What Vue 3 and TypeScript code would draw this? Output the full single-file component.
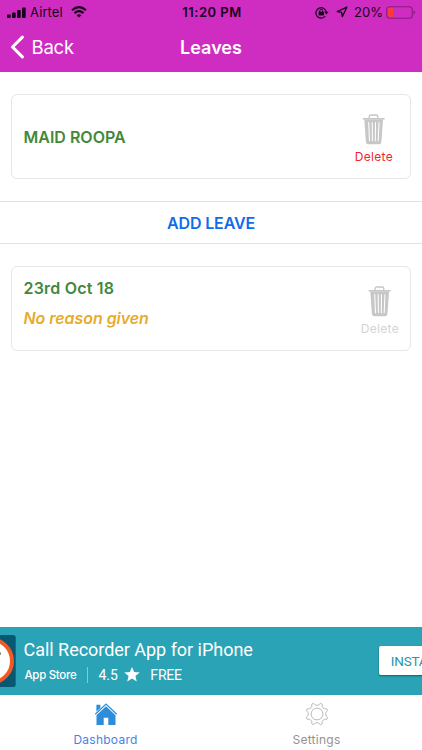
<script setup lang="ts">
interface Tab {
  name: string
  active: boolean
}

const tabs: Tab[] = [
  { name: 'Dashboard', active: true },
  { name: 'Settings', active: false },
]

const signalBars = [3.5, 5.5, 8, 10.5]

// Outline of an eight-toothed gear centred on 12,12 with softly hollowed gaps.
function gearOutline(): string {
  const at = (r: number, deg: number): string => {
    const a = (deg * Math.PI) / 180
    return `${(12 + r * Math.cos(a)).toFixed(2)} ${(12 + r * Math.sin(a)).toFixed(2)}`
  }
  let d = ''
  for (let i = 0; i < 8; i++) {
    const c = i * 45 + 22.5
    d += `${i === 0 ? 'M' : 'L'}${at(11.2, c - 4.5)}L${at(11.2, c + 4.5)}Q${at(6.6, c + 22.5)} ${at(11.2, c + 40.5)}`
  }
  return d + 'Z'
}
const gear = gearOutline()
</script>

<template>
  <div class="screen">
    <header class="top">
      <div class="status">
        <div class="side">
          <svg class="signal" width="19" height="11" viewBox="0 0 19 11">
            <rect v-for="(h, i) in signalBars" :key="i" :x="i * 5" :y="11 - h" width="3.7" :height="h" rx="0.9" />
          </svg>
          <span class="carrier">Airtel</span>
          <svg class="wifi" width="16" height="12" viewBox="0 0 16 12" fill="none" stroke="#16031a" stroke-width="2.1">
            <path d="M1 4.3Q8-1.9 15 4.3" />
            <path d="M3.5 7.1Q8 3.1 12.5 7.1" />
            <path d="M8 11.6L5.6 9.2Q8 7.2 10.4 9.2Z" fill="#16031a" stroke="none" />
          </svg>
        </div>
        <span class="clock">11:20 PM</span>
        <div class="side end">
          <svg class="lock" width="14" height="13" viewBox="0 0 14 13" fill="none" stroke="#16031a" stroke-width="1.2">
            <path d="M10.3 10A5.2 5.2 0 1 1 11.3 6.3" />
            <path d="M9.2 5.8h4.4l-2.2 2.8z" fill="#16031a" stroke="none" />
            <rect x="3.6" y="5.7" width="5.3" height="3.7" fill="#16031a" stroke="none" />
            <path d="M4.8 6V4.7a1.45 1.45 0 0 1 2.9 0V6" stroke-width="1" />
          </svg>
          <svg class="arrow" width="12" height="12" viewBox="0 0 12 12" fill="none" stroke="#16031a" stroke-width="1.3" stroke-linejoin="round">
            <path d="M10.8 1.2L1.2 5.6l4.4.7.7 4.4z" />
          </svg>
          <span class="percent">20%</span>
          <svg class="battery" width="30" height="13" viewBox="0 0 30 13">
            <rect x="0.7" y="0.7" width="25.6" height="11.6" rx="3" fill="none" stroke="#861d82" stroke-width="1.1" />
            <rect x="2.1" y="2.1" width="5" height="8.8" rx="1.3" fill="#ff3b30" />
            <path d="M27.6 4.4q1.5.5 1.5 2.1t-1.5 2.1z" fill="#861d82" />
          </svg>
        </div>
      </div>
      <nav class="bar">
        <div class="back">
          <svg width="15" height="24" viewBox="0 0 15 24" fill="none" stroke="#fff" stroke-width="3.1" stroke-linecap="round" stroke-linejoin="round">
            <path d="M12.4 2.2L2.5 12l9.9 9.8" />
          </svg>
          <span>Back</span>
        </div>
        <h1>Leaves</h1>
      </nav>
    </header>

    <main>
      <section class="card single">
        <strong class="name">MAID ROOPA</strong>
        <div class="delete first">
          <svg class="trash" width="24" height="31" viewBox="0 0 24 31">
            <path d="M7.2 4V2.5Q7.2 1 8.9 1h5.2q1.7 0 1.7 1.5V4" fill="none" stroke="#c5c5c5" stroke-width="1.3" />
            <path d="M.8 4.1h21.7v1.5H.8z" fill="#c1c1c1" />
            <path d="M2.3 5.6H21l-1.6 22.3q-.2 2.4-2.5 2.4H6.4q-2.3 0-2.5-2.4z" fill="#c7c7c7" />
            <path d="M6.7 8.6l.8 18.2M10.2 8.6l.2 18.2M13.5 8.6l-.2 18.2M17 8.6l-.8 18.2" stroke="#fff" stroke-width="1.05" stroke-linecap="round" />
          </svg>
          <span>Delete</span>
        </div>
      </section>

      <button class="add" type="button">ADD LEAVE</button>

      <section class="card">
        <div class="leave">
          <strong>23rd Oct 18</strong>
          <em>No reason given</em>
        </div>
        <div class="delete muted">
          <svg class="trash" width="24" height="31" viewBox="0 0 24 31">
            <path d="M7.2 4V2.5Q7.2 1 8.9 1h5.2q1.7 0 1.7 1.5V4" fill="none" stroke="#c5c5c5" stroke-width="1.3" />
            <path d="M.8 4.1h21.7v1.5H.8z" fill="#c1c1c1" />
            <path d="M2.3 5.6H21l-1.6 22.3q-.2 2.4-2.5 2.4H6.4q-2.3 0-2.5-2.4z" fill="#c7c7c7" />
            <path d="M6.7 8.6l.8 18.2M10.2 8.6l.2 18.2M13.5 8.6l-.2 18.2M17 8.6l-.8 18.2" stroke="#fff" stroke-width="1.05" stroke-linecap="round" />
          </svg>
          <span>Delete</span>
        </div>
      </section>
    </main>

    <aside class="ad">
      <svg class="thumb" width="16" height="52" viewBox="0 0 16 52">
        <path d="M0 0h13.5Q15.7 0 15.7 2.5v47Q15.7 52 13.5 52H0z" fill="#075873" />
        <circle cx="-9.8" cy="26" r="21.8" fill="#fff" stroke="#f15a22" stroke-width="4" />
        <path d="M0 16.8q1.1.6 1 2.9H0z" fill="#777" />
      </svg>
      <div class="pitch">
        <div class="title">Call Recorder App for iPhone</div>
        <div class="meta">
          <span class="store">App Store</span>
          <i class="rule"></i>
          <span class="rating">4.5</span>
          <svg width="16" height="15" viewBox="0 0 16 15" fill="#fff">
            <path d="M8 0l2.1 5.1 5.6.4-4.3 3.5 1.4 5.5L8 11.6l-4.8 2.9L4.6 9 .3 5.5l5.6-.4z" />
          </svg>
          <span class="price">FREE</span>
        </div>
      </div>
      <div class="install">INSTALL</div>
    </aside>

    <footer class="tabs">
      <div v-for="tab in tabs" :key="tab.name" class="tab" :class="{ active: tab.active }">
        <svg v-if="tab.active" width="24" height="24" viewBox="0 0 24 24">
          <path d="M2.4 2.8h4v3.1L2.4 9.5z" fill="#2e8ddb" />
          <path d="M1.3 12.3L12 2.1l10.7 10.2" fill="none" stroke="#2e8ddb" stroke-width="1.3" />
          <path d="M12 4.3L21.5 13.2V23H14.3V15.7H9.7V23H2.5V13.2z" fill="#2e8ddb" />
        </svg>
        <svg v-else width="24" height="24" viewBox="0 0 24 24" fill="none" stroke="#bababa" stroke-width="1" stroke-linejoin="round">
          <path :d="gear" />
          <circle cx="12" cy="12" r="5.9" />
        </svg>
        <span>{{ tab.name }}</span>
      </div>
    </footer>
  </div>
</template>

<style>
body {
  margin: 0;
  background: #fff;
}
</style>

<style scoped>
.screen {
  display: flex;
  flex-direction: column;
  width: 422px;
  height: 750px;
  overflow: hidden;
  background: #fff;
  font-family: Inter, "Liberation Sans", sans-serif;
}
.top {
  height: 71.5px;
  background: #cf2dc2;
}
.status {
  display: grid;
  grid-template-columns: 1fr auto 1fr;
  align-items: center;
  height: 24px;
  color: #16031a;
  font-size: 13px;
  line-height: 24px;
}
.side {
  display: flex;
  align-items: center;
  padding-left: 7px;
}
.end {
  justify-content: flex-end;
  padding: 0 6px 0 0;
}
.signal {
  fill: #16031a;
}
.carrier {
  margin: 0 8px 0 4px;
  letter-spacing: 0.1px;
}
.clock {
  padding-left: 2px;
  font-weight: 600;
  letter-spacing: 0.5px;
}
.arrow {
  margin: 0 6px 0 7px;
}
.battery {
  margin-left: 3px;
}
.bar {
  display: grid;
  grid-template-columns: 1fr auto 1fr;
  align-items: center;
  height: 46px;
  color: #fff;
}
.back {
  display: flex;
  align-items: center;
  gap: 6.5px;
  padding-left: 10px;
  font-size: 18.5px;
  letter-spacing: -0.2px;
}
h1 {
  margin: 0;
  font-size: 18px;
  font-weight: 600;
}
main {
  flex: 1;
  padding-top: 22.5px;
}
.card {
  display: flex;
  justify-content: space-between;
  box-sizing: border-box;
  height: 85px;
  margin: 0 11px;
  padding: 0 11px 0 11.5px;
  border: 1px solid #e6e6e6;
  border-radius: 6px;
  color: #43883a;
  font-size: 16px;
}
.single {
  align-items: center;
}
strong {
  font-weight: 600;
}
.delete {
  display: flex;
  flex-direction: column;
  align-items: center;
  align-self: flex-start;
  padding-top: 19px;
  color: #f02727;
  font-size: 12px;
  line-height: 16px;
}
.delete span {
  margin-top: 4px;
  letter-spacing: 0.3px;
}
.first {
  padding-right: 6px;
}
.muted {
  color: #d3d3d3;
}
.add {
  display: block;
  box-sizing: border-box;
  width: 100%;
  height: 43px;
  margin: 22px 0;
  padding: 0;
  border: solid #e3e3e3;
  border-width: 1px 0;
  background: #fff;
  color: #126bea;
  font: 600 16px Inter, sans-serif;
  letter-spacing: -0.15px;
}
.leave {
  display: flex;
  flex-direction: column;
  gap: 10px;
  padding-top: 11px;
  line-height: 20px;
}
.leave strong {
  letter-spacing: 0.2px;
}
em {
  color: #e8ab2a;
  font-weight: 600;
  letter-spacing: -0.05px;
}
.ad {
  display: flex;
  align-items: center;
  height: 67.5px;
  background: #2ba3b6;
  color: #fff;
  font-family: Roboto, sans-serif;
}
.thumb {
  flex: none;
}
.pitch {
  flex: none;
  padding: 3px 0 0 7.5px;
}
.title {
  font-size: 18px;
  letter-spacing: -0.03px;
  line-height: 25px;
  white-space: nowrap;
}
.meta {
  display: flex;
  align-items: center;
  height: 25px;
  padding-left: 1px;
  font-size: 14px;
}
.store {
  font: 500 11.5px Inter, sans-serif;
  letter-spacing: -0.3px;
}
.rule {
  width: 1px;
  height: 16px;
  margin: 0 10px 0 11px;
  background: #83c9d4;
}
.rating {
  margin-right: 6px;
}
.price {
  margin-left: 10.5px;
  letter-spacing: -0.2px;
}
.install {
  flex: none;
  box-sizing: border-box;
  width: 80px;
  height: 29px;
  margin-left: 126px;
  padding-left: 12px;
  border-radius: 2px;
  background: #fff;
  box-shadow: 0 1px 2px #15606d;
  color: #2796aa;
  font-size: 13.5px;
  letter-spacing: -0.2px;
  line-height: 30px;
}
.tabs {
  display: grid;
  grid-template-columns: 1fr 1fr;
  width: 422px;
  height: 55.5px;
}
.tab {
  display: flex;
  flex-direction: column;
  align-items: center;
  padding-top: 7px;
  color: #929292;
  font-size: 12px;
  letter-spacing: 0.25px;
}
.tab span {
  margin-top: 6px;
  line-height: 16px;
}
.active {
  color: #4b7fe8;
}
</style>
